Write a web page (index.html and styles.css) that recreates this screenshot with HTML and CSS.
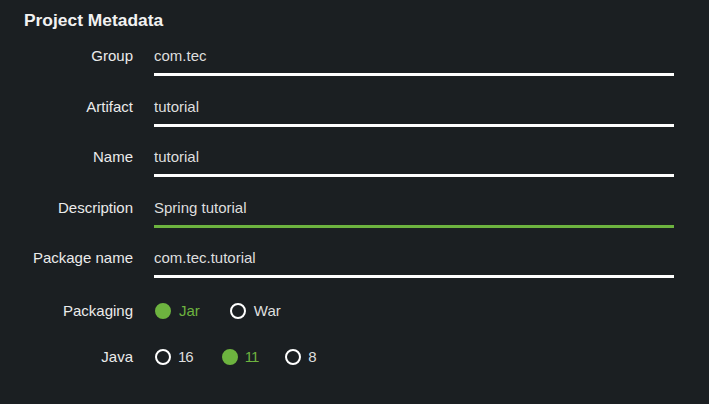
FILE: index.html
```html
<!DOCTYPE html>
<html>
<head>
<meta charset="utf-8">
<link rel="stylesheet" href="styles.css">
</head>
<body>
<div class="panel">
  <h2 class="title">Project Metadata</h2>
  <div class="form">
    <div class="row">
      <label class="label">Group</label>
      <div class="field">com.tec</div>
    </div>
    <div class="row">
      <label class="label">Artifact</label>
      <div class="field">tutorial</div>
    </div>
    <div class="row">
      <label class="label">Name</label>
      <div class="field">tutorial</div>
    </div>
    <div class="row">
      <label class="label">Description</label>
      <div class="field focused">Spring tutorial</div>
    </div>
    <div class="row">
      <label class="label">Package name</label>
      <div class="field">com.tec.tutorial</div>
    </div>
    <div class="row radio-row">
      <label class="label">Packaging</label>
      <div class="options">
        <span class="option checked"><span class="dot"></span>Jar</span>
        <span class="option"><span class="dot"></span>War</span>
      </div>
    </div>
    <div class="row radio-row java">
      <label class="label">Java</label>
      <div class="options">
        <span class="option"><span class="dot"></span><span class="num">16</span></span>
        <span class="option checked"><span class="dot"></span><span class="num">11</span></span>
        <span class="option"><span class="dot"></span><span class="num">8</span></span>
      </div>
    </div>
  </div>
</div>
</body>
</html>
```

FILE: styles.css
```css
html, body {
  margin: 0;
  padding: 0;
  background: #1b1f22;
}
body {
  width: 709px;
  height: 404px;
  overflow: hidden;
  font-family: "Liberation Sans", Arial, sans-serif;
  font-size: 15px;
  color: #e6e6e6;
}
.panel {
  padding: 10px 35px 0 0;
}
.title {
  margin: 0 0 0 24px;
  font-size: 17.4px;
  font-weight: bold;
  line-height: 20px;
  color: #f2f2f2;
}
.form {
  display: flex;
  flex-direction: column;
  margin-top: 16px;
  gap: 20.5px;
}
.row {
  display: grid;
  grid-template-columns: 133px 1fr;
  column-gap: 21px;
  align-items: start;
}
.label {
  text-align: right;
  line-height: 20px;
  color: #ebebeb;
}
.field {
  line-height: 20px;
  padding-bottom: 7px;
  border-bottom: 3px solid #ffffff;
  color: #dedede;
}
.field.focused {
  border-bottom-color: #6db33f;
}
.radio-row {
  align-items: center;
  margin-top: 2px;
}
.radio-row.java {
  margin-top: 6px;
}
.options {
  display: flex;
  align-items: center;
  padding-left: 1px;
}
.option {
  display: inline-flex;
  align-items: center;
  gap: 8px;
  line-height: 20px;
  margin-right: 30px;
  color: #dedede;
}
.java .option {
  gap: 7px;
  margin-right: 29px;
}
.java .option:nth-child(2) {
  margin-right: 27px;
}
.num {
  letter-spacing: -1px;
}
.dot {
  width: 12px;
  height: 12px;
  border: 2px solid #ffffff;
  border-radius: 50%;
  box-sizing: content-box;
}
.option.checked {
  color: #6db33f;
}
.option.checked .dot {
  background: #6db33f;
  border-color: #6db33f;
}
```
